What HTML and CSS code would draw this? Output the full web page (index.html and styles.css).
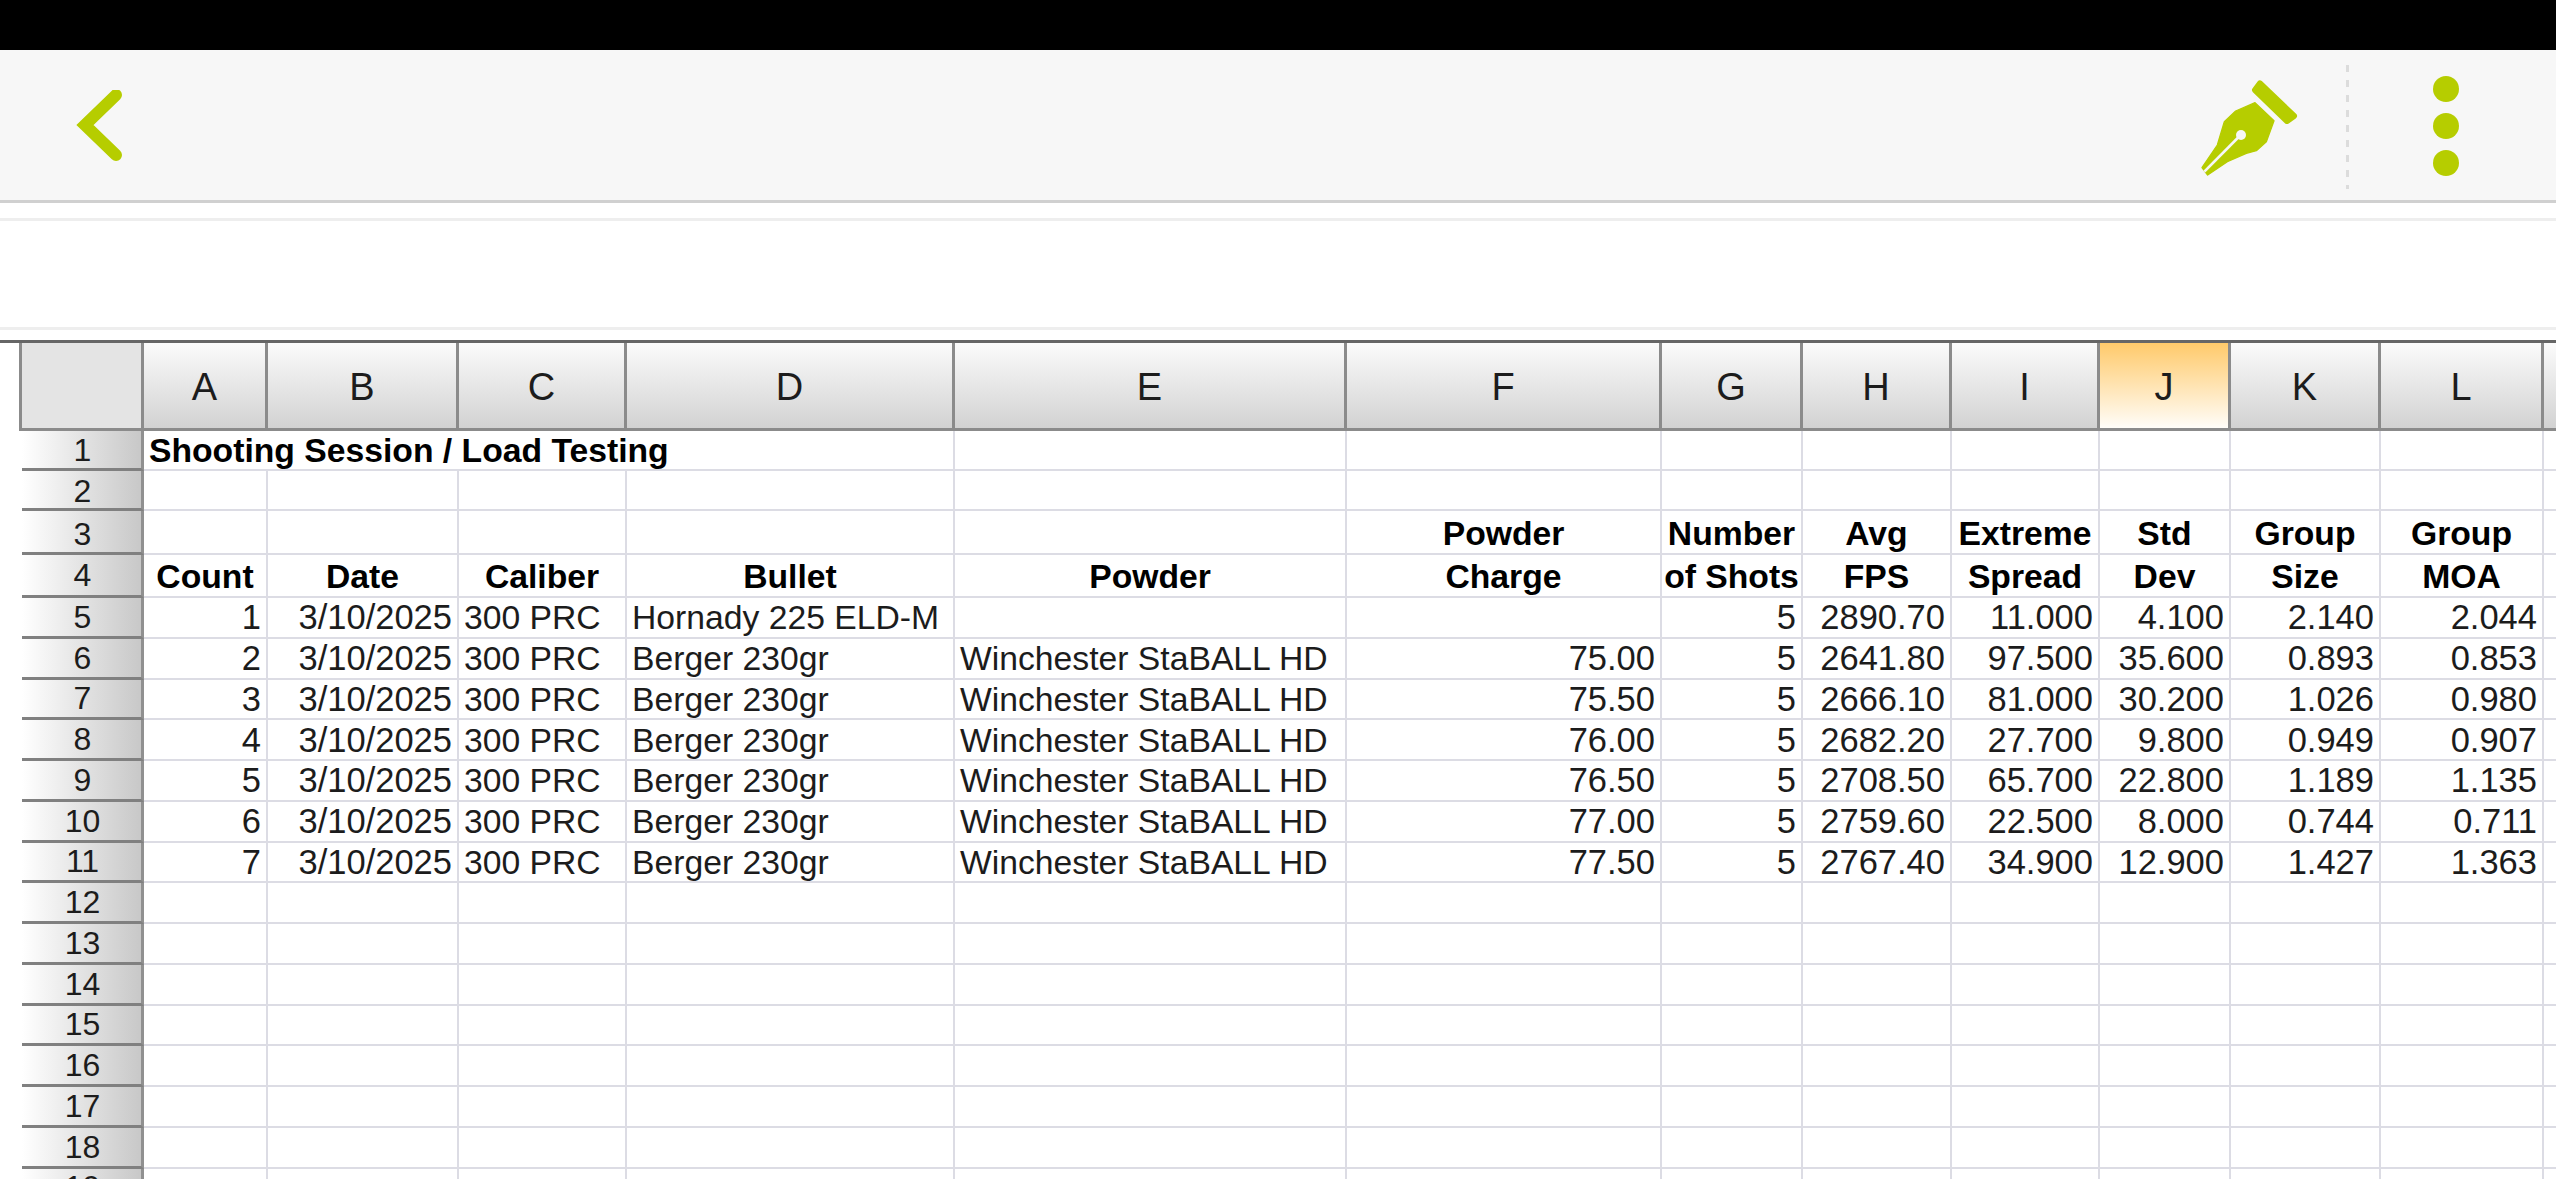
FILE: index.html
```html
<!DOCTYPE html>
<html lang="en">
<head>
<meta charset="utf-8">
<title>Shooting Session / Load Testing</title>
<link rel="stylesheet" href="styles.css">
</head>
<body>
<div class="status-bar"></div>
<header class="toolbar">
  <svg class="back" viewBox="0 0 60 80" aria-hidden="true"><path d="M43 5 L12 35 L43 65"/></svg>
  <div class="actions">
    <svg class="nib" viewBox="0 0 510 390" aria-hidden="true">
      <path class="nib-bar" d="M273 70 L375 168 L354 183 L258 90 Z"/>
      <path class="nib-body" d="M258 128 L315 182 L292 245 L262 272 L232 280 L175 305 L116 345 L99 323 L145 255 L166 185 L200 153 Z"/>
      <path class="nib-slit" d="M215 225 L106 335"/>
      <circle class="nib-hole" cx="216" cy="225" r="15"/>
    </svg>
    <div class="dash"></div>
    <div class="dots"><span></span><span></span><span></span></div>
  </div>
</header>
<div class="strip"></div>
<div class="formula"></div>
<div class="gap"></div>
<main class="sheet">
<table class="grid">
<colgroup>
<col class="w-rh"><col class="w-a"><col class="w-b"><col class="w-c"><col class="w-d"><col class="w-e"><col class="w-f"><col class="w-g"><col class="w-h"><col class="w-i"><col class="w-j"><col class="w-k"><col class="w-l"><col class="w-m">
</colgroup>
<thead>
<tr class="head"><th class="corner"></th><th>A</th><th>B</th><th>C</th><th>D</th><th>E</th><th>F</th><th>G</th><th>H</th><th>I</th><th class="sel">J</th><th>K</th><th>L</th><th></th></tr>
</thead>
<tbody>
<tr class="r1"><th class="rh">1</th><td colspan="4" class="title">Shooting Session / Load Testing</td><td></td><td></td><td></td><td></td><td></td><td></td><td></td><td></td><td></td></tr>
<tr class="r2"><th class="rh">2</th><td></td><td></td><td></td><td></td><td></td><td></td><td></td><td></td><td></td><td></td><td></td><td></td><td></td></tr>
<tr class="r3"><th class="rh">3</th><td></td><td></td><td></td><td></td><td></td><td class="b">Powder</td><td class="b">Number</td><td class="b">Avg</td><td class="b">Extreme</td><td class="b">Std</td><td class="b">Group</td><td class="b">Group</td><td></td></tr>
<tr class="r4"><th class="rh">4</th><td class="b">Count</td><td class="b">Date</td><td class="b">Caliber</td><td class="b">Bullet</td><td class="b">Powder</td><td class="b">Charge</td><td class="b">of Shots</td><td class="b">FPS</td><td class="b">Spread</td><td class="b">Dev</td><td class="b">Size</td><td class="b">MOA</td><td></td></tr>
<tr><th class="rh">5</th><td class="n">1</td><td class="n">3/10/2025</td><td>300 PRC</td><td>Hornady 225 ELD-M</td><td></td><td></td><td class="n">5</td><td class="n">2890.70</td><td class="n">11.000</td><td class="n">4.100</td><td class="n">2.140</td><td class="n">2.044</td><td></td></tr>
<tr><th class="rh">6</th><td class="n">2</td><td class="n">3/10/2025</td><td>300 PRC</td><td>Berger 230gr</td><td>Winchester StaBALL HD</td><td class="n">75.00</td><td class="n">5</td><td class="n">2641.80</td><td class="n">97.500</td><td class="n">35.600</td><td class="n">0.893</td><td class="n">0.853</td><td></td></tr>
<tr><th class="rh">7</th><td class="n">3</td><td class="n">3/10/2025</td><td>300 PRC</td><td>Berger 230gr</td><td>Winchester StaBALL HD</td><td class="n">75.50</td><td class="n">5</td><td class="n">2666.10</td><td class="n">81.000</td><td class="n">30.200</td><td class="n">1.026</td><td class="n">0.980</td><td></td></tr>
<tr><th class="rh">8</th><td class="n">4</td><td class="n">3/10/2025</td><td>300 PRC</td><td>Berger 230gr</td><td>Winchester StaBALL HD</td><td class="n">76.00</td><td class="n">5</td><td class="n">2682.20</td><td class="n">27.700</td><td class="n">9.800</td><td class="n">0.949</td><td class="n">0.907</td><td></td></tr>
<tr><th class="rh">9</th><td class="n">5</td><td class="n">3/10/2025</td><td>300 PRC</td><td>Berger 230gr</td><td>Winchester StaBALL HD</td><td class="n">76.50</td><td class="n">5</td><td class="n">2708.50</td><td class="n">65.700</td><td class="n">22.800</td><td class="n">1.189</td><td class="n">1.135</td><td></td></tr>
<tr><th class="rh">10</th><td class="n">6</td><td class="n">3/10/2025</td><td>300 PRC</td><td>Berger 230gr</td><td>Winchester StaBALL HD</td><td class="n">77.00</td><td class="n">5</td><td class="n">2759.60</td><td class="n">22.500</td><td class="n">8.000</td><td class="n">0.744</td><td class="n">0.711</td><td></td></tr>
<tr><th class="rh">11</th><td class="n">7</td><td class="n">3/10/2025</td><td>300 PRC</td><td>Berger 230gr</td><td>Winchester StaBALL HD</td><td class="n">77.50</td><td class="n">5</td><td class="n">2767.40</td><td class="n">34.900</td><td class="n">12.900</td><td class="n">1.427</td><td class="n">1.363</td><td></td></tr>
<tr><th class="rh">12</th><td></td><td></td><td></td><td></td><td></td><td></td><td></td><td></td><td></td><td></td><td></td><td></td><td></td></tr>
<tr><th class="rh">13</th><td></td><td></td><td></td><td></td><td></td><td></td><td></td><td></td><td></td><td></td><td></td><td></td><td></td></tr>
<tr><th class="rh">14</th><td></td><td></td><td></td><td></td><td></td><td></td><td></td><td></td><td></td><td></td><td></td><td></td><td></td></tr>
<tr><th class="rh">15</th><td></td><td></td><td></td><td></td><td></td><td></td><td></td><td></td><td></td><td></td><td></td><td></td><td></td></tr>
<tr><th class="rh">16</th><td></td><td></td><td></td><td></td><td></td><td></td><td></td><td></td><td></td><td></td><td></td><td></td><td></td></tr>
<tr><th class="rh">17</th><td></td><td></td><td></td><td></td><td></td><td></td><td></td><td></td><td></td><td></td><td></td><td></td><td></td></tr>
<tr><th class="rh">18</th><td></td><td></td><td></td><td></td><td></td><td></td><td></td><td></td><td></td><td></td><td></td><td></td><td></td></tr>
<tr><th class="rh">19</th><td></td><td></td><td></td><td></td><td></td><td></td><td></td><td></td><td></td><td></td><td></td><td></td><td></td></tr>
</tbody>
</table>
</main>
</body>
</html>
```

FILE: styles.css
```css
html, body {
  margin: 0;
  padding: 0;
  width: 2556px;
  height: 1179px;
  overflow: hidden;
  background: #fff;
  font-family: "Liberation Sans", Arial, sans-serif;
}

.status-bar {
  height: 50px;
  background: #000;
}

.toolbar {
  box-sizing: border-box;
  height: 153px;
  background: #f7f7f7;
  border-bottom: 3px solid #d0d0d0;
  display: flex;
  justify-content: space-between;
  align-items: flex-start;
}

.back {
  display: block;
  width: 60px;
  height: 80px;
  margin: 40px 0 0 73px;
  fill: none;
  stroke: #b6cd00;
  stroke-width: 12;
  stroke-linecap: round;
  stroke-linejoin: miter;
}

.actions {
  display: flex;
  align-items: flex-start;
}

.nib {
  display: block;
  width: 170px;
  height: 130px;
  margin-top: 10px;
}
.nib-bar { fill: #b6cd00; stroke: #b6cd00; stroke-width: 18; stroke-linejoin: round; }
.nib-body { fill: #b6cd00; stroke: #b6cd00; stroke-width: 4; stroke-linejoin: round; }
.nib-slit { fill: none; stroke: #f7f7f7; stroke-width: 8; }
.nib-hole { fill: #f7f7f7; }

.dash {
  width: 3px;
  height: 124px;
  margin: 15px 0 0 7px;
  background: repeating-linear-gradient(to bottom, #dcdcdc 0 7px, transparent 7px 15px);
}

.dots {
  display: flex;
  flex-direction: column;
  gap: 11px;
  margin: 26px 97px 0 84px;
}
.dots span {
  display: block;
  width: 26px;
  height: 26px;
  border-radius: 50%;
  background: #b6cd00;
}

.strip {
  height: 15px;
}
.formula {
  height: 106px;
  border-top: 3px solid #eeeeee;
  border-bottom: 3px solid #eeeeee;
}
.gap {
  height: 10px;
}

.sheet {
  border-top: 3px solid #666;
  padding-left: 22px;
}

.grid {
  table-layout: fixed;
  width: 2700px;
  border-collapse: separate;
  border-spacing: 0;
  font-size: 33.7px;
  line-height: 30px;
  color: #1c1c1c;
}

.w-rh { width: 122px; }
.w-a { width: 124px; }
.w-b { width: 191px; }
.w-c { width: 168px; }
.w-d { width: 328px; }
.w-e { width: 392px; }
.w-f { width: 315px; }
.w-g { width: 141px; }
.w-h { width: 149px; }
.w-i { width: 148px; }
.w-j { width: 131px; }
.w-k { width: 150px; }
.w-l { width: 163px; }
.w-m { width: 178px; }

.grid tbody tr { height: 40.75px; }
.grid tbody .r1 { height: 40px; }
.grid tbody .r2 { height: 40px; }
.grid tbody .r3 { height: 44px; }
.grid tbody .r4 { height: 43px; }

.head { height: 88px; }
.head th {
  box-sizing: border-box;
  padding: 2px 0 0;
  font-size: 38px;
  font-weight: 400;
  color: #1c1c1c;
  background: linear-gradient(to bottom, #fbfbfb 0%, #d2d2d2 100%);
  border-right: 3px solid #8b8b8b;
  border-bottom: 3px solid #8b8b8b;
}
.head .sel {
  background: linear-gradient(to bottom, #ffca6b 0%, #fffdf9 100%);
}
.head .corner {
  background: #e4e4e4;
  box-shadow: -3px 0 0 #8b8b8b;
}

.rh {
  box-sizing: border-box;
  padding: 0 0 0 2px;
  font-size: 32px;
  font-weight: 400;
  color: #1c1c1c;
  background: linear-gradient(to right, #ffffff 0%, #c8c8c8 100%);
  border-right: 3px solid #909090;
  border-bottom: 3px solid #808080;
}
.r2 .rh { padding-top: 2px; }
.r3 .rh { padding-top: 4px; }
.r3 .b { padding-top: 2px; }

.grid td {
  box-sizing: border-box;
  padding: 0 5px;
  border-right: 2px solid #dcdce4;
  border-bottom: 2px solid #dcdce4;
  white-space: nowrap;
  overflow: hidden;
}
.grid .title {
  font-weight: 700;
  color: #000;
}
.grid .b {
  font-weight: 700;
  color: #000;
  text-align: center;
  padding-left: 0;
  padding-right: 0;
}
.grid .n {
  text-align: right;
  font-size: 34.5px;
  padding-right: 5px;
}
```
